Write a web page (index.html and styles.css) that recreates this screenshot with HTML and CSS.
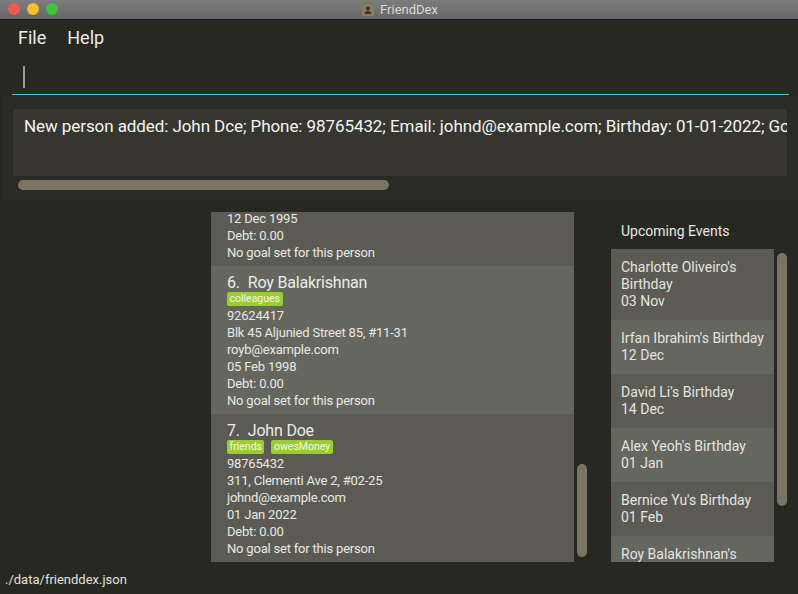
FILE: index.html
```html
<!DOCTYPE html>
<html>
<head>
<meta charset="utf-8">
<title>FriendDex</title>
<link rel="stylesheet" href="styles.css">
</head>
<body>
<div class="window">
  <header class="titlebar">
    <div class="lights">
      <span class="tl tl-red"></span>
      <span class="tl tl-yellow"></span>
      <span class="tl tl-green"></span>
    </div>
    <div class="title">
      <svg class="app-icon" width="12" height="12" viewBox="0 0 12 12">
        <rect x="0" y="0" width="12" height="12" rx="1" fill="#8a7b62"/>
        <circle cx="6" cy="4.6" r="2" fill="#3d3528"/>
        <path d="M2.6 10 C2.8 7.6 4.2 7 6 7 C7.8 7 9.2 7.6 9.4 10 Z" fill="#3d3528"/>
      </svg>
      <span>FriendDex</span>
    </div>
  </header>

  <nav class="menubar">
    <span class="menu-item">File</span>
    <span class="menu-item">Help</span>
  </nav>

  <div class="command">
    <div class="command-box"><span class="caret"></span></div>
  </div>

  <section class="result-wrap">
    <div class="result-box">
      <p class="result-text">New person added: John Dce; Phone: 98765432; Email: johnd@example.com; Birthday: 01-01-2022; Goal: No goal set for this person; Tags: [owesMoney][friends]</p>
    </div>
    <div class="hscroll"><div class="hthumb"></div></div>
  </section>

  <main class="main">
    <div class="person-panel">
      <div class="person-list">
        <article class="card card-dark">
          <div class="name-row"><span class="idx">5.</span><span class="name">Irfan Ibrahim</span></div>
          <div class="tags"><span class="tag">classmates</span></div>
          <div class="line">92492021</div>
          <div class="line">Blk 47 Tampines Street 20, #17-35</div>
          <div class="line">irfan@example.com</div>
          <div class="line">12 Dec 1995</div>
          <div class="line">Debt: 0.00</div>
          <div class="line">No goal set for this person</div>
        </article>
        <article class="card card-light">
          <div class="name-row"><span class="idx">6.</span><span class="name">Roy Balakrishnan</span></div>
          <div class="tags"><span class="tag">colleagues</span></div>
          <div class="line">92624417</div>
          <div class="line">Blk 45 Aljunied Street 85, #11-31</div>
          <div class="line">royb@example.com</div>
          <div class="line">05 Feb 1998</div>
          <div class="line">Debt: 0.00</div>
          <div class="line">No goal set for this person</div>
        </article>
        <article class="card card-dark">
          <div class="name-row"><span class="idx">7.</span><span class="name">John Doe</span></div>
          <div class="tags"><span class="tag">friends</span><span class="tag">owesMoney</span></div>
          <div class="line">98765432</div>
          <div class="line">311, Clementi Ave 2, #02-25</div>
          <div class="line">johnd@example.com</div>
          <div class="line">01 Jan 2022</div>
          <div class="line">Debt: 0.00</div>
          <div class="line">No goal set for this person</div>
        </article>
      </div>
      <div class="vscroll"><div class="vthumb" style="margin-top:252px;height:93px"></div></div>
    </div>

    <div class="events-panel">
      <div class="events-label">Upcoming Events</div>
      <div class="events-body">
        <div class="events-list">
          <div class="event card-dark"><div>Charlotte Oliveiro's Birthday</div><div>03 Nov</div></div>
          <div class="event card-light"><div>Irfan Ibrahim's Birthday</div><div>12 Dec</div></div>
          <div class="event card-dark"><div>David Li's Birthday</div><div>14 Dec</div></div>
          <div class="event card-light"><div>Alex Yeoh's Birthday</div><div>01 Jan</div></div>
          <div class="event card-dark"><div>Bernice Yu's Birthday</div><div>01 Feb</div></div>
          <div class="event card-light"><div>Roy Balakrishnan's Birthday</div><div>05 Feb</div></div>
        </div>
        <div class="vscroll"><div class="vthumb" style="margin-top:4px;height:253px"></div></div>
      </div>
    </div>
  </main>

  <footer class="status">./data/frienddex.json</footer>
</div>
</body>
</html>
```

FILE: styles.css
```css
* { box-sizing: border-box; }

html, body {
  margin: 0;
  padding: 0;
  background: #282823;
}

body {
  width: 798px;
  height: 594px;
  overflow: hidden;
  font-family: Roboto, "Liberation Sans", sans-serif;
  color: #e6e6e2;
}

.window {
  display: flex;
  flex-direction: column;
  height: 594px;
}

/* title bar */
.titlebar {
  height: 20px;
  flex: none;
  background: linear-gradient(#7d7d7d, #666666);
  border-bottom: 1px solid #141414;
  display: flex;
  align-items: center;
  justify-content: center;
  position: relative;
}

.lights {
  position: absolute;
  left: 8px;
  top: 3px;
  display: flex;
  gap: 7px;
}

.tl {
  width: 12px;
  height: 12px;
  border-radius: 50%;
  display: block;
}
.tl-red { background: #ee5a52; }
.tl-yellow { background: #f5bd30; }
.tl-green { background: #3fc43f; }

.title {
  display: flex;
  align-items: center;
  gap: 6px;
  font-size: 13px;
  color: #d9d9d9;
  padding-left: 2px;
}

.app-icon { display: block; }

/* menu */
.menubar {
  height: 35px;
  flex: none;
  display: flex;
  align-items: center;
  gap: 21px;
  padding-left: 18px;
  font-size: 18px;
  color: #ececec;
}

/* command */
.command {
  height: 41px;
  flex: none;
  padding: 0 9px 0 12px;
}

.command-box {
  height: 40px;
  border-bottom: 1px solid #43c6e6;
  padding: 11px 0 0 11px;
}

.caret {
  display: block;
  width: 2px;
  height: 22px;
  background: #9a9a96;
}

/* result */
.result-wrap {
  height: 104px;
  flex: none;
  background: #2b2b26;
  margin-left: 3px;
  padding: 13px 11px 0 10px;
}

.result-box {
  height: 67px;
  background: #36362f;
  overflow: hidden;
  padding: 7px 0 0 11px;
}

.result-text {
  margin: 0;
  white-space: nowrap;
  font-size: 17px;
  letter-spacing: -0.08px;
  color: #f4f4f4;
}

.hscroll {
  height: 14px;
  padding: 4px 0 0 5px;
}

.hthumb {
  width: 371px;
  height: 10px;
  border-radius: 5px;
  background: #7a7563;
}

/* main */
.main {
  flex: none;
  height: 362px;
  display: flex;
  padding: 12px 0 0 211px;
}

.person-panel {
  display: flex;
  height: 350px;
}

.person-list {
  width: 363px;
  height: 350px;
  overflow: hidden;
  display: flex;
  flex-direction: column;
  justify-content: flex-end;
}

.card {
  flex: none;
  padding: 6px 10px 5px 16px;
  font-size: 13px;
}
.card-dark { background: #5b5b53; }
.card-light { background: #65665e; }

.name-row {
  height: 20px;
  display: flex;
  align-items: center;
  gap: 8px;
  font-size: 16px;
  letter-spacing: -0.2px;
  color: #ececea;
}

.tags {
  height: 15px;
  display: flex;
  gap: 7px;
  padding-bottom: 1px;
}

.tag {
  background: #9acd32;
  color: #f6f6f0;
  font-size: 10.5px;
  line-height: 14px;
  padding: 0 2.5px;
  border-radius: 2px;
}

.line {
  height: 17px;
  line-height: 17px;
  color: #e8e8e4;
  letter-spacing: -0.2px;
  white-space: nowrap;
}

.vscroll {
  width: 16px;
  padding: 0 3px;
  display: flex;
  flex-direction: column;
}

.vthumb {
  width: 10px;
  border-radius: 5px;
  background: #7a7563;
  flex: none;
}

/* events */
.events-panel {
  margin-left: 21px;
  display: flex;
  flex-direction: column;
}

.events-label {
  height: 37px;
  padding-top: 1px;
  line-height: 36px;
  padding-left: 10px;
  font-size: 14px;
  color: #e6e6e2;
}

.events-body {
  display: flex;
  height: 313px;
}

.events-list {
  width: 163px;
  overflow: hidden;
}

.event {
  padding: 10px;
  font-size: 14px;
  line-height: 17px;
  color: #e4e4e0;
}

/* status */
.status {
  flex: none;
  height: 32px;
  padding: 10px 0 0 5px;
  font-size: 13px;
  color: #e0e0dc;
}
```
